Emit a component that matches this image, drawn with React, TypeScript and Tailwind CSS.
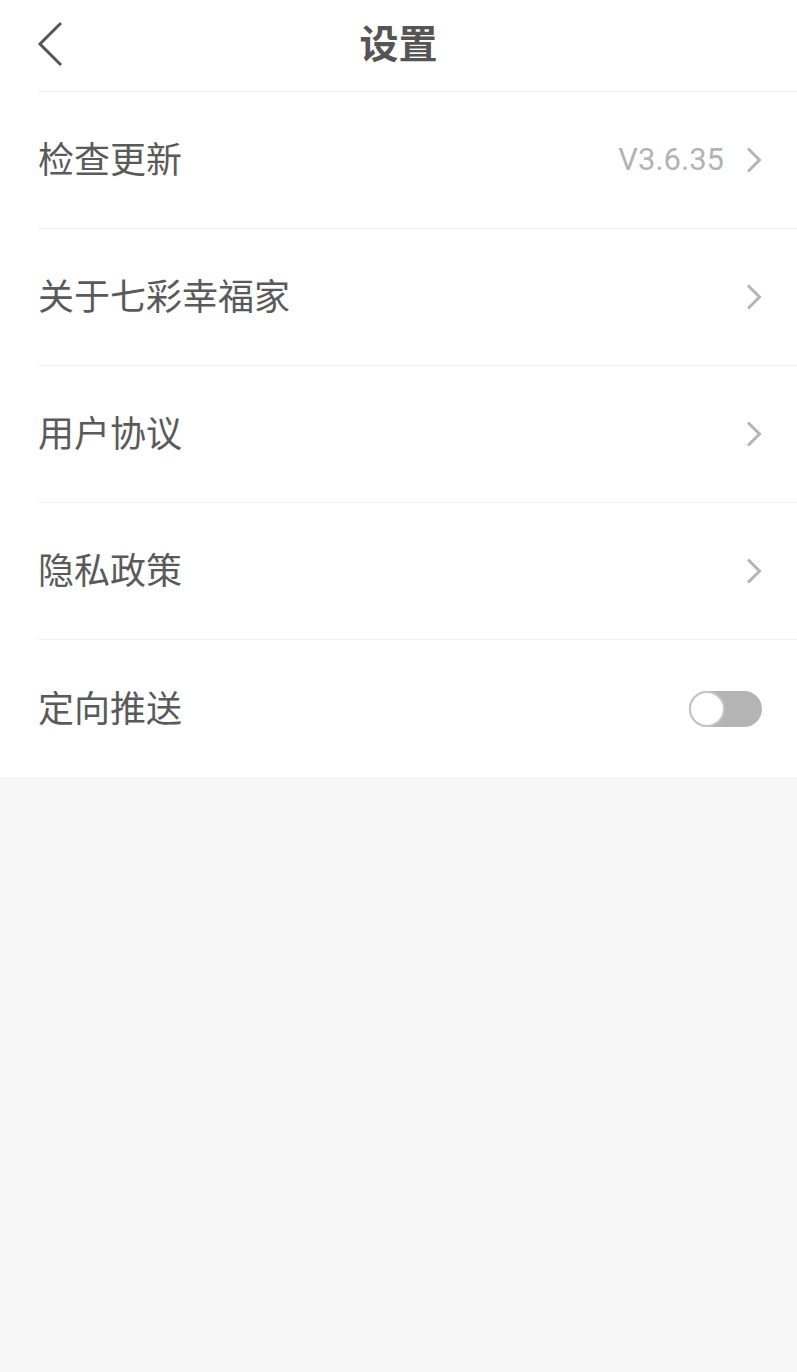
import React, { useState } from "react";

const font = { fontFamily: '"Roboto", "Noto Sans CJK SC", sans-serif' };

const Chevron = () => (
  <svg width="16" height="26" viewBox="0 0 16 26" fill="none" className="ml-[22px]">
    <path d="M2 1.5L13.5 13L2 24.5" stroke="#b5b5b5" strokeWidth="3" />
  </svg>
);

interface RowProps {
  label: string;
  right?: React.ReactNode;
  last?: boolean;
}

const Row: React.FC<RowProps> = ({ label, right, last }) => (
  <div className={`flex h-[137px] items-center pr-[35px] ${last ? "" : "border-b border-[#f2f2f2]"}`}>
    <span className="flex-1 pt-[2px] text-[36px] text-[#5a5a5a]">{label}</span>
    {right}
  </div>
);

export default function App() {
  const [pushOn, setPushOn] = useState(false);

  return (
    <div className="flex min-h-[1372px] w-full flex-col bg-[#f7f7f7]" style={font}>
      <div className="bg-white">
        <div className="relative flex h-[91px] items-center justify-center">
          <button className="absolute left-[36px] top-[21px]">
            <svg width="28" height="46" viewBox="0 0 28 46" fill="none">
              <path d="M25 2L4 23L25 44" stroke="#555555" strokeWidth="3" />
            </svg>
          </button>
          <h1 className="text-[39px] font-bold text-[#555555]">设置</h1>
        </div>
        <div className="ml-[38px] border-t border-[#f2f2f2]">
          <Row
            label="检查更新"
            right={
              <div className="flex items-center">
                <span className="text-[31px] text-[#b3b3b3]">V3.6.35</span>
                <Chevron />
              </div>
            }
          />
          <Row label="关于七彩幸福家" right={<Chevron />} />
          <Row label="用户协议" right={<Chevron />} />
          <Row label="隐私政策" right={<Chevron />} />
          <Row
            label="定向推送"
            last
            right={
              <button
                onClick={() => setPushOn(!pushOn)}
                className={`relative h-[36px] w-[73px] rounded-full ${pushOn ? "bg-[#4cd964]" : "bg-[#b4b4b4]"}`}
              >
                <span
                  className={`absolute top-0 h-[36px] w-[36px] rounded-full border-2 border-[#c4c4c4] bg-white ${pushOn ? "right-0" : "left-0"}`}
                />
              </button>
            }
          />
        </div>
      </div>
    </div>
  );
}
